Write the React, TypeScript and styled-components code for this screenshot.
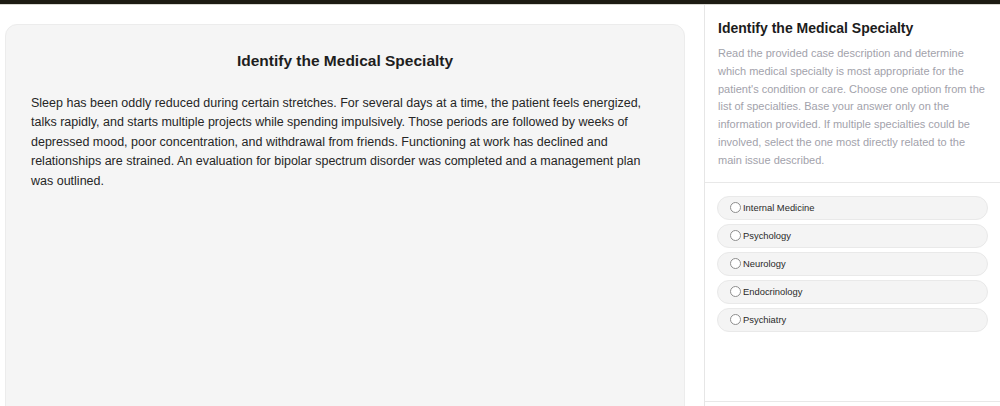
import React from "react";
import styled, { createGlobalStyle } from "styled-components";

const Global = createGlobalStyle`
  html, body { margin: 0; padding: 0; background: #ffffff; }
  body { font-family: "Liberation Sans", Arial, sans-serif; }
  * { box-sizing: border-box; }
`;

const TopBar = styled.div`
  height: 5px;
  background: #1c1b13;
  border-bottom: 1px solid #d8d8d2;
`;

const Layout = styled.div`
  display: flex;
  height: 401px;
  overflow: hidden;
`;

const Main = styled.main`
  flex: 1;
  padding: 19px 19px 0 5px;
`;

const Card = styled.section`
  background: #f5f5f5;
  border: 1px solid #ececec;
  border-radius: 12px;
  min-height: 420px;
  padding: 26px 25px;
`;

const CardTitle = styled.h2`
  margin: 0 0 23px;
  text-align: center;
  font-size: 15.5px;
  line-height: 20px;
  font-weight: 700;
  color: #1e1e1e;
`;

const CaseText = styled.p`
  margin: 0;
  font-size: 12.5px;
  line-height: 19.4px;
  color: #262626;
`;

const Sidebar = styled.aside`
  width: 296px;
  border-left: 1px solid #e6e6e6;
  display: flex;
  flex-direction: column;
`;

const SideHeader = styled.div`
  padding: 14px 13px 12px;
  border-bottom: 1px solid #e8e8e8;
`;

const SideTitle = styled.h3`
  margin: 0 0 8px;
  font-size: 14px;
  line-height: 18px;
  font-weight: 700;
  color: #1c1c1c;
`;

const SideText = styled.p`
  margin: 0;
  font-size: 11px;
  line-height: 17.8px;
  color: #a2a2ab;
`;

const Options = styled.div`
  height: 219px;
  padding: 13px 12px 0;
  display: flex;
  flex-direction: column;
  gap: 4px;
  border-bottom: 1px solid #e8e8e8;
`;

const Option = styled.label`
  display: flex;
  align-items: center;
  gap: 2px;
  height: 24px;
  padding: 0 12px;
  background: #f4f4f4;
  border: 1px solid #e9e9e9;
  border-radius: 12px;
  font-size: 9.4px;
  color: #2a2a2a;
  cursor: pointer;
`;

const Radio = styled.span`
  width: 11px;
  height: 11px;
  border-radius: 50%;
  border: 1px solid #8e8e8e;
  background: #ffffff;
  flex-shrink: 0;
`;

const options = [
  "Internal Medicine",
  "Psychology",
  "Neurology",
  "Endocrinology",
  "Psychiatry",
];

export default function App() {
  return (
    <>
      <Global />
      <TopBar />
      <Layout>
        <Main>
          <Card>
            <CardTitle>Identify the Medical Specialty</CardTitle>
            <CaseText>
              Sleep has been oddly reduced during certain stretches. For several days at a time, the patient feels energized,
              talks rapidly, and starts multiple projects while spending impulsively. Those periods are followed by weeks of
              depressed mood, poor concentration, and withdrawal from friends. Functioning at work has declined and
              relationships are strained. An evaluation for bipolar spectrum disorder was completed and a management plan
              was outlined.
            </CaseText>
          </Card>
        </Main>
        <Sidebar>
          <SideHeader>
            <SideTitle>Identify the Medical Specialty</SideTitle>
            <SideText>
              Read the provided case description and determine which medical specialty is most appropriate for the
              patient's condition or care. Choose one option from the list of specialties. Base your answer only on the
              information provided. If multiple specialties could be involved, select the one most directly related to the
              main issue described.
            </SideText>
          </SideHeader>
          <Options>
            {options.map((o) => (
              <Option key={o}>
                <Radio />
                {o}
              </Option>
            ))}
          </Options>
        </Sidebar>
      </Layout>
    </>
  );
}
